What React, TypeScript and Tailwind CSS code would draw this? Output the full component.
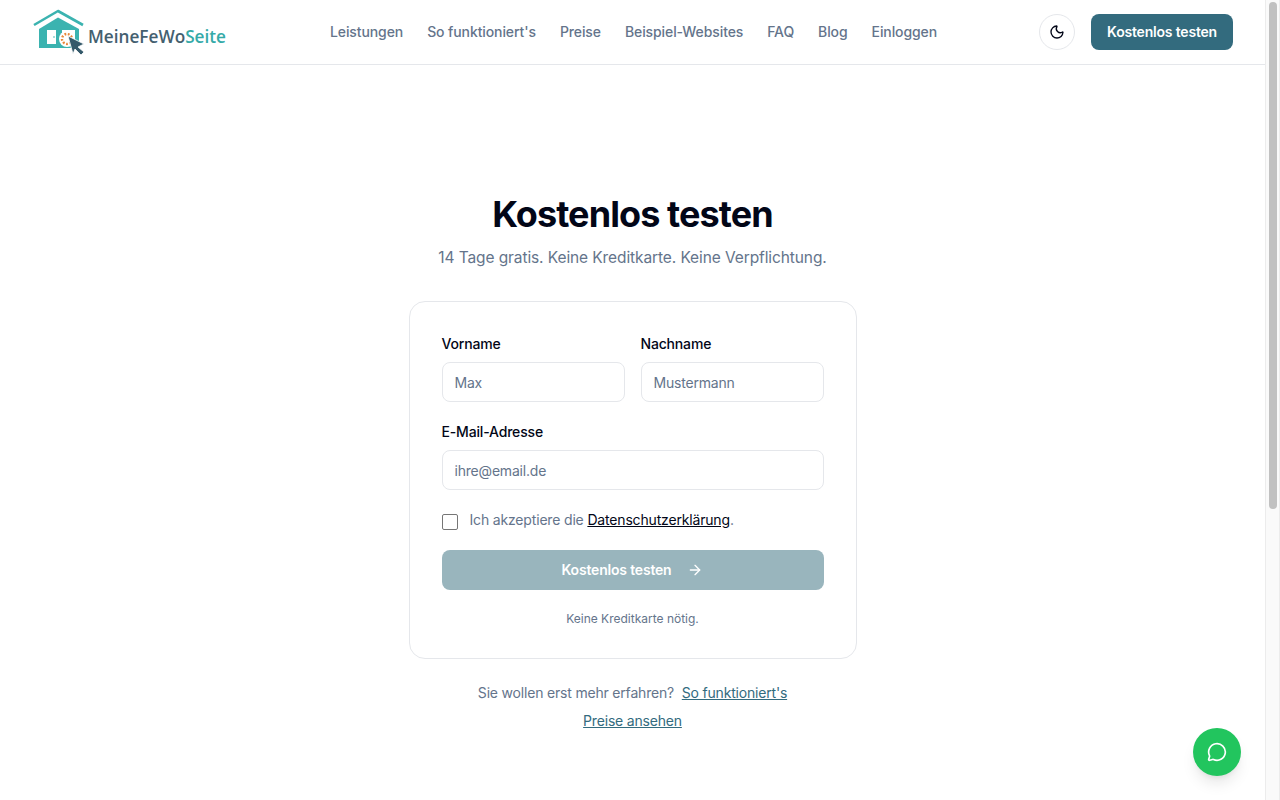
import { ArrowRight, MessageCircle, Moon } from "lucide-react";

const navLinks = ["Leistungen", "So funktioniert's", "Preise", "Beispiel-Websites", "FAQ", "Blog", "Einloggen"];

function Logo() {
  return (
    <div className="flex w-[196px] items-center">
      <svg width="54" height="48" viewBox="0 0 54 48" className="block shrink-0">
        <path d="M2 17 L26 3 L51 17" fill="none" stroke="#3bb3b0" strokeWidth="2.6" strokeLinejoin="round" />
        <path d="M7 21 L26 9.5 L47 21 V40 H7 Z" fill="#3bb3b0" />
        <rect x="15" y="22" width="9" height="14" fill="#fff" />
        <circle cx="22" cy="29" r="0.8" fill="#3bb3b0" />
        <rect x="30" y="22" width="13" height="12" fill="#fff" />
        <circle cx="35" cy="31" r="8" fill="#fff" />
        <circle cx="35" cy="31" r="5" fill="none" stroke="#e8873a" strokeWidth="2.4" strokeDasharray="1.8 1.6" />
        <path d="M36 28 L52 36 L46 39 L52 44 L49 47 L43 41 L41 46 Z" fill="#34596a" stroke="#fff" strokeWidth="0.8" />
      </svg>
      <span className="mt-[10px] ml-[2px] font-['Open_Sans',sans-serif] text-[17.2px] leading-6 font-semibold whitespace-nowrap text-[#44606f]">
        MeineFeWo<span className="text-[#35aaa8]">Seite</span>
      </span>
    </div>
  );
}

function Field({ label, placeholder }: { label: string; placeholder: string }) {
  return (
    <label className="flex flex-1 flex-col gap-2">
      <span className="text-sm leading-5 font-medium tracking-[-0.17px] text-[#020617]">{label}</span>
      <input
        placeholder={placeholder}
        className="h-10 w-full rounded-lg border border-[#e5e7eb] bg-white px-3 text-sm tracking-[-0.2px] text-[#020617] placeholder:text-[#64748b]"
      />
    </label>
  );
}

export default function App() {
  return (
    <div className="flex h-screen overflow-hidden bg-white font-['Inter',sans-serif]">
      <div className="relative flex-1">
        <header className="flex h-[65px] items-center justify-between border-b border-[#e5e7eb] px-8">
          <Logo />
          <nav className="flex items-center gap-6">
            {navLinks.map((link) => (
              <a key={link} className="text-sm leading-5 font-medium tracking-[-0.1px] text-[#64748b]">
                {link}
              </a>
            ))}
          </nav>
          <div className="flex items-center gap-4">
            <button className="flex h-9 w-9 items-center justify-center rounded-full border border-[#e5e7eb] bg-white text-[#020617]">
              <Moon size={16} />
            </button>
            <button className="h-9 rounded-lg bg-[#336b7e] px-4 text-sm font-semibold tracking-[-0.19px] text-white">
              Kostenlos testen
            </button>
          </div>
        </header>

        <main className="flex flex-col items-center pt-[127px]">
          <h1 className="text-4xl leading-[44px] font-bold tracking-tight text-[#020617]">Kostenlos testen</h1>
          <p className="mt-[10px] text-[15.5px] leading-6 tracking-[-0.1px] text-[#64748b]">
            14 Tage gratis. Keine Kreditkarte. Keine Verpflichtung.
          </p>

          <form className="mt-[31px] flex w-[448px] flex-col rounded-2xl border border-[#e5e7eb] bg-white px-8 pt-8 pb-[31px]">
            <div className="flex gap-4">
              <Field label="Vorname" placeholder="Max" />
              <Field label="Nachname" placeholder="Mustermann" />
            </div>
            <div className="mt-5">
              <Field label="E-Mail-Adresse" placeholder="ihre@email.de" />
            </div>
            <div className="mt-5 flex items-start gap-3">
              <span className="mt-[4px] h-4 w-4 rounded-[2px] border border-[#767676] bg-white" />
              <p className="text-sm leading-5 tracking-[-0.17px] text-[#64748b]">
                Ich akzeptiere die <a className="text-[#020617] underline">Datenschutzerklärung</a>.
              </p>
            </div>
            <button
              type="button"
              className="mt-5 flex h-10 items-center justify-center gap-2 rounded-lg bg-[#99b5bd] text-sm font-semibold tracking-[-0.19px] text-white"
            >
              Kostenlos testen
              <ArrowRight size={16} className="ml-2" />
            </button>
            <p className="mt-[21px] text-center text-xs leading-4 text-[#64748b]">Keine Kreditkarte nötig.</p>
          </form>

          <p className="mt-6 text-sm leading-5 tracking-[-0.19px] text-[#64748b]">
            Sie wollen erst mehr erfahren? <a className="ml-1 text-[#336b7e] underline">So funktioniert's</a>
          </p>
          <a className="mt-2 text-sm leading-5 tracking-[-0.19px] text-[#336b7e] underline">Preise ansehen</a>
        </main>

        <button className="absolute right-6 bottom-6 flex h-12 w-12 items-center justify-center rounded-full bg-[#22c55e] text-white shadow-lg">
          <MessageCircle size={20} />
        </button>
      </div>

      <div className="w-[15px] border-x border-[#ececec] bg-[#fafafa] px-[3px] py-[2px]">
        <div className="h-[507px] w-[8px] rounded-full bg-[#c1c1c1]" />
      </div>
    </div>
  );
}
